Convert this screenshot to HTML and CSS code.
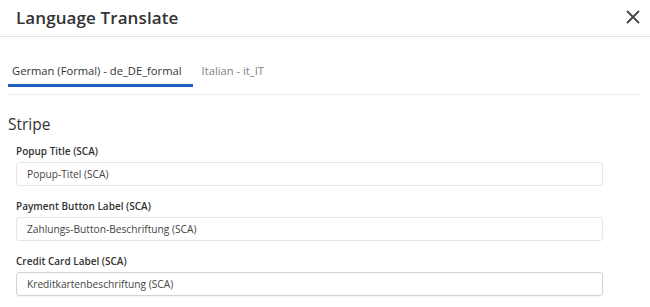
FILE: index.html
```html
<!DOCTYPE html>
<html lang="en">
<head>
<meta charset="utf-8">
<title>Language Translate</title>
<link rel="stylesheet" href="styles.css">
</head>
<body>
<div class="modal">
  <header class="modal-header">
    <h1 class="modal-title">Language Translate</h1>
    <button class="close" aria-label="Close">
      <svg width="14" height="14" viewBox="0 0 14 14"><path d="M1.5 1.5 L12.5 12.5 M12.5 1.5 L1.5 12.5" stroke="#444" stroke-width="1.8" stroke-linecap="round"/></svg>
    </button>
  </header>
  <div class="modal-body">
    <nav class="tabs">
      <span class="tab active">German (Formal) - de_DE_formal</span>
      <span class="tab">Italian - it_IT</span>
    </nav>
    <section class="group">
      <h2 class="group-title">Stripe</h2>
      <div class="field">
        <label class="field-label">Popup Title (SCA)</label>
        <div class="input">Popup-Titel (SCA)</div>
      </div>
      <div class="field">
        <label class="field-label">Payment Button Label (SCA)</label>
        <div class="input">Zahlungs-Button-Beschriftung (SCA)</div>
      </div>
      <div class="field">
        <label class="field-label">Credit Card Label (SCA)</label>
        <div class="input focus">Kreditkartenbeschriftung (SCA)</div>
      </div>
    </section>
  </div>
</div>
</body>
</html>
```
FILE: styles.css
```css
* { box-sizing: border-box; }
html, body { margin: 0; padding: 0; background: #fff; }
body {
  font-family: "Open Sans", "Noto Sans", sans-serif;
  color: #333;
  width: 650px;
  height: 307px;
  overflow: hidden;
}
.modal-header {
  height: 37px;
  border-bottom: 1px solid #e3e3e3;
  display: flex;
  align-items: center;
  justify-content: space-between;
  padding: 0 7px 2px 16px;
}
.modal-title {
  margin: 0;
  font-size: 17px;
  font-weight: 600;
  color: #333;
  letter-spacing: 0.1px;
}
.close {
  border: 0;
  background: none;
  padding: 0;
  width: 20px;
  height: 20px;
  display: flex;
  align-items: center;
  justify-content: center;
}
.modal-body { padding: 0 10px 0 8px; }
.tabs {
  margin-top: 26px;
  display: flex;
  gap: 5px;
  border-bottom: 1px solid #ececec;
  padding-bottom: 7px;
}
.tab {
  font-size: 11.2px;
  line-height: 16px;
  color: #808080;
  padding: 0 4px 5px 4px;
  border-bottom: 3px solid transparent;
}
.tab.active {
  color: #333;
  padding-right: 11px;
  border-bottom-color: #1f5fbf;
}
.group-title {
  margin: 19px 0 0 0;
  font-size: 15.5px;
  line-height: 20px;
  font-weight: 500;
  color: #333;
}
.field { padding-left: 8px; }
.field-label {
  display: block;
  font-size: 10px;
  line-height: 14px;
  font-weight: 600;
  color: #333;
  margin-top: 13px;
  margin-bottom: 4px;
}
.field:first-of-type .field-label { margin-top: 10px; }
.input {
  width: 587px;
  height: 24px;
  border: 1px solid #e6e6e6;
  border-radius: 3px;
  font-size: 10.2px;
  color: #444;
  padding: 0 10px;
  display: flex;
  align-items: center;
}
.input.focus { border-color: #d4d4d4; box-shadow: 0 1px 2px rgba(0,0,0,0.05); }
```
